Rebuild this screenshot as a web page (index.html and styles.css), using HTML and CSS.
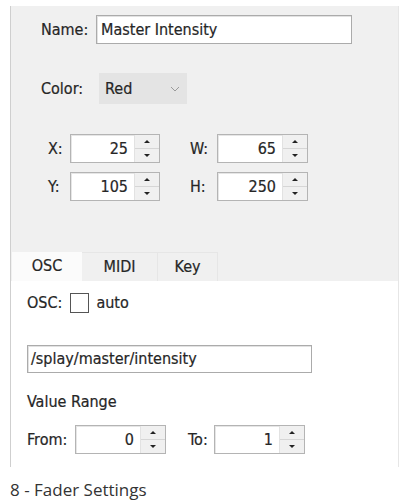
FILE: index.html
```html
<!DOCTYPE html>
<html>
<head>
<meta charset="utf-8">
<link rel="stylesheet" href="styles.css">
</head>
<body>
<div class="panel">
  <div class="top">
    <div class="row name-row">
      <span class="lbl name-lbl">Name:</span>
      <div class="field name-field">Master Intensity</div>
    </div>
    <div class="row color-row">
      <span class="lbl color-lbl">Color:</span>
      <div class="combo"><span>Red</span>
        <svg class="chev" width="10" height="6" viewBox="0 0 10 6"><path d="M1 1 L5 5 L9 1" fill="none" stroke="#9a9a9a" stroke-width="1"/></svg>
      </div>
    </div>
    <div class="geo">
      <span class="lbl glbl">X:</span>
      <div class="spin"><div class="val">25</div><div class="btns"><span class="up"></span><span class="dn"></span></div></div>
      <span class="lbl glbl g2">W:</span>
      <div class="spin"><div class="val">65</div><div class="btns"><span class="up"></span><span class="dn"></span></div></div>
      <span class="lbl glbl">Y:</span>
      <div class="spin"><div class="val">105</div><div class="btns"><span class="up"></span><span class="dn"></span></div></div>
      <span class="lbl glbl g2">H:</span>
      <div class="spin"><div class="val">250</div><div class="btns"><span class="up"></span><span class="dn"></span></div></div>
    </div>
    <div class="tabs">
      <div class="tab active">OSC</div>
      <div class="tab">MIDI</div>
      <div class="tab">Key</div>
    </div>
  </div>
  <div class="content">
    <div class="row osc-row">
      <span class="lbl">OSC:</span>
      <span class="check"></span>
      <span class="lbl">auto</span>
    </div>
    <div class="field path-field">/splay/master/intensity</div>
    <div class="lbl range-title">Value Range</div>
    <div class="row range-row">
      <span class="lbl">From:</span>
      <div class="spin"><div class="val">0</div><div class="btns"><span class="up"></span><span class="dn"></span></div></div>
      <span class="lbl to-lbl">To:</span>
      <div class="spin"><div class="val">1</div><div class="btns"><span class="up"></span><span class="dn"></span></div></div>
    </div>
  </div>
</div>
<div class="caption">8 - Fader Settings</div>
</body>
</html>
```
FILE: styles.css
```css
html, body {
  margin: 0;
  padding: 0;
  background: #ffffff;
}
body {
  width: 408px;
  height: 502px;
  overflow: hidden;
  font-family: "DejaVu Sans Condensed", "DejaVu Sans", sans-serif;
  font-size: 16px;
  color: #262626;
}
.panel {
  margin: 6px 0 0 10px;
  width: 387px;
  border-left: 1px solid #cfcfcf;
  border-right: 1px solid #e6e6e6;
  height: 461px;
  display: flex;
  flex-direction: column;
  -webkit-text-stroke: 0.2px #262626;
}
.top {
  background: #f0f0f0;
  padding-top: 9px;
}
.row {
  display: flex;
  align-items: center;
}
.lbl {
  line-height: 18px;
}
.name-row {
  padding-left: 30px;
}
.name-lbl {
  width: 55px;
}
.field {
  box-sizing: border-box;
  background: #fff;
  border: 1px solid #ababab;
  box-shadow: inset 1px 1px 0 #e2e2e2;
  height: 29px;
  line-height: 27px;
  padding-left: 4px;
}
.name-field {
  width: 256px;
}
.color-row {
  padding-left: 30px;
  margin-top: 29px;
}
.color-lbl {
  width: 58px;
}
.combo {
  box-sizing: border-box;
  width: 88px;
  height: 31px;
  background: #e4e4e4;
  display: flex;
  align-items: center;
  justify-content: space-between;
  padding: 0 7px 0 6px;
}
.chev {
  display: block;
}
.geo {
  display: grid;
  grid-template-columns: 22px 90px 57px 91px;
  grid-template-rows: 29px 29px;
  row-gap: 9px;
  align-items: center;
  margin-top: 30px;
  padding-left: 37px;
}
.g2 {
  padding-left: 30px;
}
.spin {
  box-sizing: border-box;
  height: 29px;
  width: 100%;
  border: 1px solid #b4b4b4;
  display: flex;
  background: #fff;
}
.val {
  flex: 1;
  text-align: right;
  line-height: 27px;
  padding-right: 6px;
  box-shadow: inset 1px 1px 0 #e6e6e6;
}
.btns {
  width: 24px;
  display: flex;
  flex-direction: column;
  background: #f0f0f0;
  border-left: 1px solid #e2e2e2;
}
.btns span {
  flex: 1;
  display: flex;
  align-items: center;
  justify-content: center;
}
.btns .up {
  border-bottom: 1px solid #d6d6d6;
}
.btns .up::after {
  content: "";
  border-left: 3px solid transparent;
  border-right: 3px solid transparent;
  border-bottom: 3px solid #222;
}
.btns .dn::after {
  content: "";
  border-left: 3px solid transparent;
  border-right: 3px solid transparent;
  border-top: 3px solid #222;
}
.tabs {
  display: flex;
  margin-top: 51px;
  height: 29px;
  padding-left: 1px;
}
.tab {
  box-sizing: border-box;
  height: 29px;
  line-height: 27px;
  text-align: center;
  border: 1px solid #e6e6e6;
  border-bottom: none;
  border-left: none;
}
.tab:nth-child(1) { width: 70px; }
.tab:nth-child(2) { width: 76px; }
.tab:nth-child(3) { width: 60px; }
.tab.active {
  background: #fbfbfb;
  border: none;
}
.content {
  flex: 1;
  background: #fff;
  padding-left: 16px;
}
.osc-row {
  margin-top: 12px;
  height: 20px;
}
.check {
  box-sizing: border-box;
  width: 19px;
  height: 20px;
  border: 1px solid #555;
  margin: 0 7px 0 8px;
  background: #fff;
}
.path-field {
  width: 285px;
  height: 28px;
  line-height: 26px;
  margin-top: 32px;
  padding-left: 3px;
}
.range-title {
  margin-top: 20px;
}
.range-row {
  margin-top: 14px;
}
.range-row .spin {
  width: 91px;
}
.range-row .lbl:first-child {
  width: 48px;
}
.to-lbl {
  margin-left: 22px;
  width: 26px;
}
.caption {
  margin: 12px 0 0 10px;
  font-family: "Open Sans", sans-serif;
  font-size: 17px;
  color: #333;
  line-height: 22px;
}
```
